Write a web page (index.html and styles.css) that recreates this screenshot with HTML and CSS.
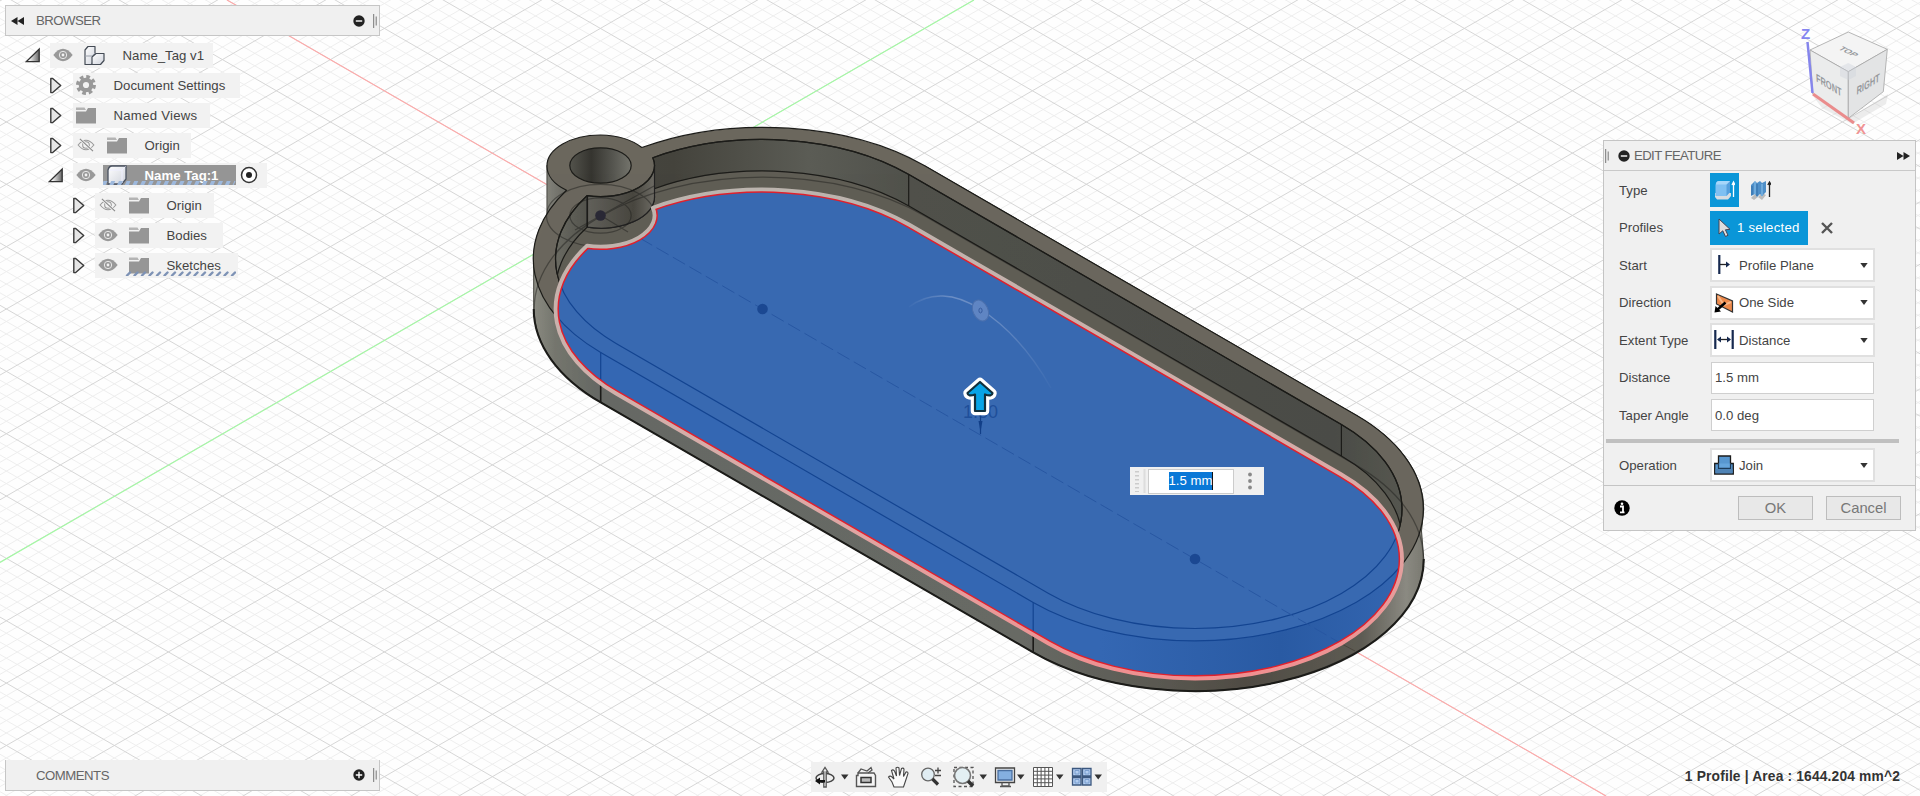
FILE: index.html
```html
<!DOCTYPE html>
<html lang="en">
<head>
<meta charset="utf-8">
<title>Name_Tag v1</title>
<link rel="stylesheet" href="styles.css">
</head>
<body>
<svg class="defs" width="0" height="0">
  <defs>
    <linearGradient id="triFill" x1="0" x2="1"><stop offset="0.2" stop-color="#fff"/><stop offset="1" stop-color="#666"/></linearGradient>
    <linearGradient id="boxFill" x1="0" x2="1" y2="1"><stop offset="0" stop-color="#fff"/><stop offset="1" stop-color="#cfd3dc"/></linearGradient>
    <symbol id="open" viewBox="0 0 16 16"><path d="M14.2 1.5V14.2H1.2Z" fill="url(#triFill)" stroke="#333" stroke-width="1.3"/></symbol>
    <symbol id="closed" viewBox="0 0 16 18"><path d="M2.500 1.500H4.500L13 9L4.500 16.500H2.500Z" fill="#e6e6e6" stroke="#3a3a3a" stroke-width="1.5" stroke-linejoin="round"/></symbol>
    <symbol id="eye" viewBox="0 0 20 14"><path d="M0.300 7Q10 -5.500 19.700 7Q10 19.500 0.300 7Z" fill="#999"/><circle cx="10" cy="7" r="3.700" fill="#999" stroke="#e8e8e8" stroke-width="1"/><circle cx="10" cy="7" r="1.400" fill="#f2f2f2"/></symbol>
    <symbol id="eyeoff" viewBox="0 0 20 16"><path d="M1 8Q10 -3 19 8Q10 19 1 8Z" fill="none" stroke="#999" stroke-width="1.200"/><circle cx="10" cy="8" r="3.800" fill="none" stroke="#999" stroke-width="1.200"/><path d="M3 1L18 15" stroke="#f2f2f2" stroke-width="3"/><path d="M3 1L18 15" stroke="#888" stroke-width="1.300"/></symbol>
    <symbol id="folder" viewBox="0 0 20 17"><path d="M0 5H10L12 1.500H20V17H0Z" fill="#969696"/><path d="M0 1H8.500L10 3.500H0Z" fill="#b4b4b4"/></symbol>
    <symbol id="gear" viewBox="0 0 20 20"><circle cx="10" cy="10" r="8.200" fill="none" stroke="#999" stroke-width="3.500" stroke-dasharray="3.600 2.840"/><circle cx="10" cy="10" r="5.200" fill="none" stroke="#999" stroke-width="4.200"/></symbol>
    <symbol id="asm" viewBox="0 0 21 21"><g fill="url(#boxFill)" stroke="#444b55" stroke-width="1.200" stroke-linejoin="round"><path d="M1 5L4 1.500H11V8L8 19.500H1Z"/><path d="M8 12L12 8.500H20V15.500L16.500 19.500H8Z"/></g><path d="M1 11H8L11 8" fill="none" stroke="#9aa0aa"/></symbol>
    <symbol id="cube" viewBox="0 0 20 20"><path d="M1 5Q2 1 5 1H19V14L15 19H1Z" fill="url(#boxFill)" stroke="#4a5260" stroke-width="1.300"/><path d="M2 5H15L18.500 1.500M15 5V18" fill="none" stroke="#eef" stroke-width="1"/></symbol>
    <symbol id="caret" viewBox="0 0 8 5"><path d="M0.300 0H7.700L4 5Z" fill="#333"/></symbol>
    <symbol id="minus" viewBox="0 0 12 12"><circle cx="6" cy="6" r="5.700" fill="#222"/><path d="M2.800 6H9.200" stroke="#fff" stroke-width="1.400"/></symbol>
    <symbol id="plus" viewBox="0 0 12 12"><circle cx="6" cy="6" r="5.700" fill="#222"/><path d="M2.800 6H9.200M6 2.800V9.200" stroke="#fff" stroke-width="1.400"/></symbol>
    <symbol id="ff" viewBox="0 0 13 8"><path d="M0 0L6.500 4L0 8ZM6.500 0L13 4L6.500 8Z" fill="#222"/></symbol>
    <symbol id="grip" viewBox="0 0 4 14"><path d="M0.700 0V14" stroke="#777" stroke-width="1"/><path d="M3.200 2.500V11.500" stroke="#777" stroke-width="1"/></symbol>
  </defs>
</svg>

<svg class="scene" viewBox="0 0 1920 796" width="1920" height="796">
  <defs>
    <linearGradient id="wall" gradientUnits="userSpaceOnUse" x1="533" y1="0" x2="1424" y2="0">
      <stop offset="0" stop-color="#8b8b82"/><stop offset="0.025" stop-color="#75766e"/><stop offset="0.070" stop-color="#666964"/>
      <stop offset="0.550" stop-color="#686a65"/><stop offset="0.680" stop-color="#5d5c55"/><stop offset="0.800" stop-color="#504c44"/>
      <stop offset="0.930" stop-color="#5e5c54"/><stop offset="0.980" stop-color="#8b8a82"/><stop offset="1" stop-color="#7a7971"/>
    </linearGradient>
    <linearGradient id="inner" gradientUnits="userSpaceOnUse" x1="555" y1="0" x2="1402" y2="0">
      <stop offset="0" stop-color="#6b6b63"/><stop offset="0.060" stop-color="#45453f"/><stop offset="0.140" stop-color="#44433c"/><stop offset="0.300" stop-color="#5b5c55"/>
      <stop offset="0.420" stop-color="#50514b"/><stop offset="0.920" stop-color="#4b4c47"/><stop offset="1" stop-color="#565750"/>
    </linearGradient>
    <linearGradient id="bossWall" gradientUnits="userSpaceOnUse" x1="546" y1="0" x2="655" y2="0">
      <stop offset="0" stop-color="#84847c"/><stop offset="0.250" stop-color="#605f59"/><stop offset="0.400" stop-color="#605f59"/><stop offset="0.800" stop-color="#48463f"/><stop offset="1" stop-color="#6e6c65"/>
    </linearGradient>
    <linearGradient id="hole" x1="0" x2="1"><stop offset="0" stop-color="#53534c"/><stop offset="0.350" stop-color="#35342f"/><stop offset="0.700" stop-color="#55554f"/><stop offset="1" stop-color="#74746c"/></linearGradient>
    <linearGradient id="halo" x1="0" x2="0" y1="0" y2="1"><stop offset="0" stop-color="#bcb4ae"/><stop offset="0.400" stop-color="#cfb0ab"/><stop offset="0.650" stop-color="#dda8a5"/><stop offset="1" stop-color="#f08f90"/></linearGradient>
    <linearGradient id="blueWall" gradientUnits="userSpaceOnUse" x1="1100" y1="0" x2="1400" y2="0"><stop offset="0" stop-color="#3467b3"/><stop offset="0.600" stop-color="#295aa3"/><stop offset="1" stop-color="#3365b0"/></linearGradient>
    <linearGradient id="arcFade" x1="0" x2="1"><stop offset="0" stop-color="#8ea7d2" stop-opacity="0.050"/><stop offset="0.300" stop-color="#8ea7d2" stop-opacity="0.600"/><stop offset="0.600" stop-color="#8ea7d2" stop-opacity="0.550"/><stop offset="1" stop-color="#8ea7d2" stop-opacity="0.050"/></linearGradient>
    <path id="profile" d="M587 245.700A54 31.200 0 0 0 652.800 207.700A207 119.500 0 0 1 908.900 224.500L1341.400 474.500A207 119.500 0 0 1 1048.600 643.500L616.100 393.500A207 119.500 0 0 1 587 245.700Z"/>
    <path id="rim" d="M924.300 165.600L1356.800 415.600A228.800 132.100 0 0 1 1033.200 602.400L600.700 352.400A228.800 132.100 0 0 1 924.300 165.600Z"/>
    <clipPath id="inProfile"><use href="#profile"/></clipPath>
    <clipPath id="inMouth"><use href="#profile" y="-50"/></clipPath>
    <clipPath id="inBody"><path d="M546.500 165.500A54 31.200 0 0 1 600.500 134.300L642.500 146.500A228.800 132.100 0 0 1 924.300 165.600L1356.800 415.600A228.800 132.100 0 0 1 1423.800 509V559A228.800 132.100 0 0 1 1033.200 652.400L600.700 402.400A228.800 132.100 0 0 1 533.700 309V259L546.500 214Z"/></clipPath>
  </defs>
  <g id="grid">
    <path id="minor" class="grid-minor"/>
    <path id="major" class="grid-major"/>
    <path class="axis-x" d="M227 0L1606 796"/>
    <path class="axis-y" d="M0 562.500L974 0"/>
  </g>

  <g class="edges">
    <path d="M547 165.500V215.500A54 31.200 0 0 0 654.500 215.500V165.500Z" fill="url(#bossWall)" stroke="#55544e"/>
    <path d="M924.300 165.600L1356.800 415.600A228.800 132.100 0 0 1 1423.800 509L1421.500 531L1423.800 559A228.800 132.100 0 0 1 1033.200 652.400L600.700 402.400A228.800 132.100 0 0 1 533.700 309V259A228.800 132.100 0 0 1 567.700 189.700L652 158Z" fill="url(#wall)" stroke="#44443e" stroke-width="1"/>
    <path d="M533.700 309A228.800 132.100 0 0 0 600.700 402.400L1033.200 652.400A228.800 132.100 0 0 0 1423.800 559" fill="none" stroke-width="2"/>
    <path d="M641.800 147.500A228.800 132.100 0 0 1 924.300 165.600L1356.800 415.600A228.800 132.100 0 0 1 1033.200 602.400L600.700 352.400A228.800 132.100 0 0 1 566.500 190.200A53.500 30.900 0 0 1 547 165.900A53.500 30.900 0 0 1 600.500 135A53.500 30.900 0 0 1 641.800 147.500Z" fill="#6b675d"/>
    <use href="#profile" y="-50" fill="url(#inner)"/>
    <g clip-path="url(#inMouth)">
      <use href="#profile" y="-18.500" fill="#605d55"/>
      <path d="M587 195.700A54 31.200 0 0 0 654.500 165.500V197A54 31.200 0 0 1 587 227.200Z" fill="url(#bossWall)" stroke="#222"/>
      <path d="M908.700 174.500V206M1341.400 424.500V456M587.500 195.700V227"/>
    </g>
    <use href="#profile" y="-50" fill="none"/>
    <ellipse cx="600.500" cy="165.500" rx="30.700" ry="17.700" fill="url(#hole)"/>
    <path d="M600.700 353V402M1033.200 603V652" stroke-width="1.600"/>
  </g>
  <g class="hidden-edges" clip-path="url(#inBody)">
    <use href="#rim" y="50"/>
    <ellipse cx="600.500" cy="215.500" rx="54" ry="31.200"/>
    <ellipse cx="600.500" cy="215.500" rx="30.700" ry="17.700"/>
    <path d="M575 230L654 186M600 215L628 232"/>
  </g>
  <circle cx="600.500" cy="215.500" r="5.300" fill="#292835"/>
  <path d="M1340 643L1355 651" stroke="#4a453d" fill="none"/>

  <use href="#profile" fill="#3869b1"/>
  <g clip-path="url(#inProfile)">
    <path d="M500 294L600.700 352.400L1033.200 602.400A228.800 132.100 0 0 0 1423.800 509V720H500Z" fill="url(#blueWall)"/>
    <g class="ghost-edges">
      <use href="#rim"/>
      <use href="#profile" y="-50"/>
      <path d="M600.700 352.400V402M1033.200 602.400V652"/>
    </g>
    <path class="centerline" d="M640 238.200L1340 642.900"/>
    <use href="#profile" class="selected-edge"/>
  </g>
  <use href="#profile" fill="none" stroke="url(#halo)" stroke-width="3.800" stroke-linejoin="round"/>
  <circle cx="762.500" cy="309" r="5.300" fill="#1b4892"/>
  <circle cx="1195" cy="559" r="5.300" fill="#1b4892"/>

  <path d="M909 307C930 291 955 293 980 309C1010 328 1033 356 1051 388" fill="none" stroke="url(#arcFade)" stroke-width="1.400"/>
  <ellipse cx="980.500" cy="310.500" rx="7.500" ry="11" transform="rotate(-24 980.500 310.500)" fill="#5f85c3" stroke="#4b70ad"/>
  <ellipse cx="980.500" cy="310.500" rx="1.600" ry="2.400" fill="none" stroke="#365b9e"/>
  <text class="dimension" x="963" y="418" textLength="35">1.50</text>
  <path d="M980.500 415V434" stroke="#123f88" stroke-width="1.200"/><path d="M978.500 421H982.500L980.500 432Z" fill="#123f88"/>
  <path d="M980 382L992.500 393Q992 397 985 394.500V411H975V394.500Q968 397 967.500 393Z" fill="none" stroke="#fff" stroke-width="8.500" stroke-linejoin="round"/>
  <path d="M980 382L992.500 393Q992 397 985 394.500V411H975V394.500Q968 397 967.500 393Z" fill="#08a4e6" stroke="#12303c" stroke-width="2.200" stroke-linejoin="round"/>

  <g class="viewcube">
    <path d="M1813 96L1848 119L1888 94L1886 104L1852 124L1822 108Z" fill="#999" opacity="0.180" stroke="none"/>
    <path d="M1848.300 32L1887.300 49.300L1848.300 71.700L1810 50Z" fill="#f4f4f4"/>
    <path d="M1810 50L1848.300 71.700V118.300L1812.700 94Z" fill="#ebecec"/>
    <path d="M1848.300 71.700L1887.300 49.300L1883.300 91.700L1848.300 118.300Z" fill="#e3e4e5"/>
    <path d="M1840 67L1848.300 63L1856 67V76L1848.300 80L1840 76Z" fill="#ccd3dc" opacity="0.400" stroke="none"/>
    <path d="M1807.500 42L1812.500 93" stroke="#8585ec" stroke-width="2.500"/>
    <path d="M1813 94L1854 123" stroke="#ea8c8c" stroke-width="3"/>
    <text class="axis-z" x="1801" y="38.500">Z</text>
    <text class="axis-label-x" x="1856" y="134">X</text>
    <g class="face">
      <text transform="matrix(.85 .42 -.8 .42 1846 53)" text-anchor="middle">TOP</text>
      <text transform="matrix(.78 .47 .06 1.200 1829 89)" text-anchor="middle">FRONT</text>
      <text transform="matrix(.78 -.47 -.04 1.200 1868 88)" text-anchor="middle">RIGHT</text>
    </g>
  </g>
</svg>

<header class="dock dock-browser">
  <svg class="ff flip"><use href="#ff"/></svg><span class="dock-title">BROWSER</span>
  <svg class="dot"><use href="#minus"/></svg><svg class="grip"><use href="#grip"/></svg>
</header>

<nav class="tree">
  <div class="row l0"><svg class="tw"><use href="#open"/></svg><div class="chip w163"><svg class="eye"><use href="#eye"/></svg><svg class="asm"><use href="#asm"/></svg><span class="name">Name_Tag v1</span></div></div>
  <div class="row l1"><svg class="tw"><use href="#closed"/></svg><div class="chip w167"><svg class="ico"><use href="#gear"/></svg><span class="name">Document Settings</span></div></div>
  <div class="row l1"><svg class="tw"><use href="#closed"/></svg><div class="chip w137"><svg class="ico"><use href="#folder"/></svg><span class="name wide">Named Views</span></div></div>
  <div class="row l1"><svg class="tw"><use href="#closed"/></svg><div class="chip w118"><svg class="eye"><use href="#eyeoff"/></svg><svg class="ico"><use href="#folder"/></svg><span class="name">Origin</span></div></div>
  <div class="row l1"><svg class="tw"><use href="#open"/></svg><div class="chip w194"><svg class="eye"><use href="#eye"/></svg><div class="active"><svg class="ico"><use href="#cube"/></svg><span class="name">Name Tag:1</span><svg class="hatch" viewBox="0 0 133 5"><path d="M1 3H133" stroke="#9db8dc" stroke-width="4" stroke-dasharray="4 3.700" transform="skewX(-25)"/></svg></div><svg class="radio" viewBox="0 0 18 18"><circle cx="9" cy="9" r="7.500" fill="#fff" stroke="#333" stroke-width="1.500"/><circle cx="9" cy="9" r="3" fill="#222"/></svg></div></div>
  <div class="row l2"><svg class="tw"><use href="#closed"/></svg><div class="chip w119"><svg class="eye"><use href="#eyeoff"/></svg><svg class="ico"><use href="#folder"/></svg><span class="name">Origin</span></div></div>
  <div class="row l2"><svg class="tw"><use href="#closed"/></svg><div class="chip w128"><svg class="eye"><use href="#eye"/></svg><svg class="ico"><use href="#folder"/></svg><span class="name">Bodies</span></div></div>
  <div class="row l2"><svg class="tw"><use href="#closed"/></svg><div class="chip w143"><svg class="eye"><use href="#eye"/></svg><svg class="ico"><use href="#folder"/></svg><span class="name">Sketches</span><svg class="hatch under" viewBox="0 0 112 5"><path d="M3 4.500L6 1.500M10.500 4.500L13.500 1.500M18 4.500L21 1.500M25.500 4.500L28.500 1.500M33 4.500L36 1.500M40.500 4.500L43.500 1.500M48 4.500L51 1.500M55.500 4.500L58.500 1.500M63 4.500L66 1.500M70.500 4.500L73.500 1.500M78 4.500L81 1.500M85.500 4.500L88.500 1.500M93 4.500L96 1.500M100.500 4.500L103.500 1.500M108 4.500L111 1.500" stroke="#7d92b5" stroke-width="2.400" stroke-linecap="round"/></svg></div></div>
</nav>

<section class="panel">
  <div class="panel-head"><svg class="grip"><use href="#grip"/></svg><svg class="dot"><use href="#minus"/></svg><span>EDIT FEATURE</span><svg class="ff"><use href="#ff"/></svg></div>
  <div class="form">
    <label>Type</label>
    <div class="types">
      <div class="type on"><svg viewBox="0 0 20 20"><path d="M0 17L2 19.500H13L16 16V13H0Z" fill="#d6dce2"/><path d="M0.500 5Q1 1 4 1H15V12L11.500 16H0.500Z" fill="#7fc0f2"/><path d="M11.500 4.500L15 1V12L11.500 16Z" fill="#559fdd"/><path d="M1 4.500H11.500L15 1H4Q1 1 1 4.500" fill="#a6d6fa"/><path d="M18.500 17V3M17 5L18.500 2L20 5" stroke="#fff" fill="none" stroke-width="1.300"/></svg></div>
      <div class="type"><svg viewBox="0 0 20 20"><path d="M0 18L4 14L7 17L11 13L15 15L11 20L7 17L3 20Z" fill="#bbb"/><path d="M0 5L4 1L6 3L9 1L11 3L15 1V12L11 16L9 14L6 17L4 14L0 16Z" fill="#4f8fc8"/><path d="M4 2V14M11 4V16" stroke="#6fabdc" stroke-width="2"/><path d="M6 4V16M1 6V15" stroke="#326fa8"/><path d="M18.500 17V3M16.800 5L18.500 2L20.200 5" stroke="#222" fill="none" stroke-width="1.300"/></svg></div>
    </div>
    <label>Profiles</label>
    <div class="types"><div class="pick"><svg class="cursor" viewBox="0 0 13 20"><path d="M1 1V16L4.800 12.800L7.500 18.500L10 17.300L7.400 11.800L12 11.300Z" fill="#ddd" stroke="#445" stroke-width="1"/></svg>1 selected</div><svg class="clear" viewBox="0 0 12 12"><path d="M1 1L11 11M11 1L1 11" stroke="#555" stroke-width="2.400"/></svg></div>
    <label>Start</label>
    <div class="select"><svg class="sico" viewBox="0 0 20 20"><path d="M5.300 0V19" stroke="#16294f" stroke-width="2.200"/><path d="M6 9.500H13" stroke="#222" stroke-width="1.300"/><path d="M12 6.500L16 9.500L12 12.500Z" fill="#16294f"/></svg>Profile Plane<svg class="caret"><use href="#caret"/></svg></div>
    <label>Direction</label>
    <div class="select"><svg class="sico" viewBox="0 0 20 20"><path d="M2.500 1L18.500 8V19L2.500 11Z" fill="#ee8a4b" stroke="#333" stroke-width="1.200"/><path d="M4 3L10 12L17 9" stroke="#f9b787" fill="none" stroke-width="2"/><path d="M11.500 9.500L3 17" stroke="#000" stroke-width="2.500"/><path d="M0.500 19.500L1.500 13L7 18.500Z"/></svg>One Side<svg class="caret"><use href="#caret"/></svg></div>
    <label>Extent Type</label>
    <div class="select"><svg class="sico" viewBox="0 0 20 20"><path d="M1.300 0V19M18.700 0V19" stroke="#16294f" stroke-width="2.200"/><path d="M4 9.500H16" stroke="#222" stroke-width="1.300"/><path d="M3 9.500L7 6.500V12.500ZM17 9.500L13 6.500V12.500Z" fill="#16294f"/></svg>Distance<svg class="caret"><use href="#caret"/></svg></div>
    <label>Distance</label><div class="field">1.5 mm</div>
    <label>Taper Angle</label><div class="field">0.0 deg</div>
  </div>
  <hr class="rule">
  <div class="form last">
    <label>Operation</label>
    <div class="select"><svg class="sico" viewBox="0 0 20 20"><path d="M0.700 8.500H4.500V1H16.500V8.500H19.300V19H0.700Z" fill="#5897d0" stroke="#1c1c1c" stroke-width="1.300"/><path d="M1.500 14H18.500V18.300H1.500Z" fill="#4f83b5"/><path d="M4.500 8.500V13.300H16.500V8.500" fill="#66a5dc" stroke="#1d3b58" stroke-width="1.200"/></svg>Join<svg class="caret"><use href="#caret"/></svg></div>
  </div>
  <div class="panel-foot"><svg class="info" viewBox="0 0 16 16"><circle cx="8" cy="8" r="7.700"/><path d="M6 6.500H9V12M6 12.300H10.500" stroke="#fff" stroke-width="1.800" fill="none"/><circle cx="8" cy="3.800" r="1.300" fill="#fff"/></svg><span class="btn">OK</span><span class="btn">Cancel</span></div>
</section>

<div class="mini"><svg class="mgrip" viewBox="0 0 12 24"><path d="M3 2V23" stroke="#ccc" stroke-width="4" stroke-dasharray="1.500 2.500"/><path d="M10.500 0V24" stroke="#ddd" stroke-width="2"/></svg><div class="mini-input"><span>1.5 mm</span></div><svg class="more" viewBox="0 0 4 18"><g fill="#888"><circle cx="2" cy="2.500" r="1.900"/><circle cx="2" cy="9" r="1.900"/><circle cx="2" cy="15.500" r="1.900"/></g></svg></div>

<header class="dock dock-comments">
  <span class="dock-title">COMMENTS</span>
  <svg class="dot"><use href="#plus"/></svg><svg class="grip"><use href="#grip"/></svg>
</header>

<div class="toolbar">
  <svg viewBox="0 0 296 30">
    <g fill="none" stroke="#333" stroke-width="1.300">
      <ellipse cx="14" cy="16" rx="9" ry="4.500" stroke="#444" stroke-width="1.500"/><path d="M12.800 25V10H11L14 5.500L17 10H15.200V25Z" fill="#eee" stroke="#555"/><path d="M4 19L9 15.500V18H14V20.500H9V22.500Z" fill="#111" stroke="none"/>
      <path d="M45.500 24.500V13.500H47V11H63L64.500 13.500V24.500Z" fill="#f4f4f4" stroke="#555" stroke-width="1.400"/><path d="M47 11L50 7L56 9L60 5.500L61 8L57 11" stroke="#555"/><path d="M50 15.500H60V20.500H50Z" fill="#bbb" stroke="#333" stroke-width="1.500"/>
      <path d="M83 25L81 20L77.500 15Q79 13 81.500 15.500L83 17L80.500 8.500Q82 7 83.500 9L85.500 14L85 6Q86.500 4.500 88 6L88.500 13.500L90.500 6.500Q92 5.500 93 7L92.500 14.500L95 10Q97 9.500 97 11.500L94.500 19L92.500 25Z" fill="#fafafa" stroke="#444" stroke-width="1.100"/>
      <circle cx="117" cy="12.500" r="6.300" fill="#e0edf3" stroke="#666"/><path d="M121.500 17L127 22.500" stroke="#333" stroke-width="3.200"/><path d="M124 8.500H130M127 5.500V11.500M124 13.500H130" stroke="#444"/>
      <path d="M143 5.500H162V24.500H143Z" stroke="#555" stroke-dasharray="3 2.500"/><circle cx="151.500" cy="13.500" r="8" fill="#e3eff3" stroke="#777" stroke-width="1.600"/><path d="M157 19L162 24" stroke="#333" stroke-width="3.500"/>
      <path d="M184.500 6H203.500V20.500H184.500Z" fill="#eee" stroke="#444"/><path d="M187 8.500H201V18H187Z" fill="#84afe0" stroke="#4a6fa0"/><path d="M191 20.500V24H198V20.500M189 24.500H200" stroke="#555"/>
      <path d="M222.500 5.500H241.500V24.500H222.500ZM226.300 5.500V24.500M230.100 5.500V24.500M233.900 5.500V24.500M237.700 5.500V24.500M222.500 9.300H241.500M222.500 13.100H241.500M222.500 16.900H241.500M222.500 20.700H241.500" fill="#fff" stroke="#555" stroke-width="1"/>
      <g fill="#b3cdf0" stroke="#3c587f"><path d="M261.500 6.500H270V14H261.500ZM271.500 6.500H280V14H271.500ZM261.500 15.500H270V23H261.500ZM271.500 15.500H280V23H271.500Z"/><path d="M264 8.500H268V12H264ZM274 8.500H278V12H274ZM264 17.500H268V21H264ZM274 17.500H278V21H274Z" stroke="#6d94c8" stroke-width="0.800"/></g>
    </g>
    <g fill="#333"><path d="M30 12.500H37.500L33.700 17.500ZM168.500 12.500H176L172.200 17.500ZM206 12.500H213.500L209.700 17.500ZM245 12.500H252.500L248.700 17.500ZM283.500 12.500H291L287.200 17.500Z"/></g>
  </svg>
</div>
<div class="status">1 Profile | Area : 1644.204 mm^2</div>
<script src="grid.js"></script>
</body>
</html>
```
FILE: styles.css
```css
body { margin: 0; width: 1920px; height: 796px; position: relative; overflow: hidden; background: #fefefe; font: 13.2px "Liberation Sans", Arial, sans-serif; color: #444; }
svg { display: block; flex: none; }
.defs { position: absolute; }
.scene { position: absolute; left: 0; top: 0; }
.grid-minor { stroke: #eeeeee; fill: none; stroke-width: 1; }
.grid-major { stroke: #d6d6d6; fill: none; stroke-width: 1; }
.axis-x { stroke: #ffa8a8; stroke-width: 1.1; }
.axis-y { stroke: #a2faa2; stroke-width: 1.1; }
.edges { stroke: #1c1c19; stroke-width: 1.2; stroke-linejoin: round; }
.hidden-edges { fill: none; stroke: #1c1c1a; stroke-width: 1.3; opacity: .45; }
.ghost-edges { fill: none; stroke: #134491; stroke-width: 1.2; }
.centerline { fill: none; stroke: #2857a2; stroke-width: 1; stroke-dasharray: 14 5; }
.selected-edge { fill: none; stroke: #e0202c; stroke-width: 6.8; }
.dimension { font-size: 18px; fill: #1f4f9a; }
.viewcube { stroke: #a4a4a4; stroke-width: .8; }
.viewcube text { stroke: none; font-family: "Liberation Sans", Arial, sans-serif; }
.axis-z { font-size: 15px; fill: #8585f0; font-weight: bold; }
.axis-label-x { font-size: 15px; fill: #f09494; font-weight: bold; }
.face text { font-size: 9.5px; fill: #96999d; font-weight: bold; }

.dock { position: absolute; left: 5px; width: 375px; box-sizing: border-box; display: flex; align-items: center; background: #f0f0f0; border: 1px solid #c6c6c6; color: #666; padding: 0 2px 0 5px; }
.dock-browser { top: 5px; height: 31px; }
.dock-comments { top: 760px; height: 31px; border-top: 0; padding-left: 30px; }
.dock-title { flex: 1; letter-spacing: -.5px; }
.dock-browser .dock-title { margin-left: 12px; }
.ff { width: 13px; height: 8px; }
.flip { transform: scaleX(-1); }
.dot { width: 12px; height: 12px; }
.grip { width: 4px; height: 14px; }
.dock .dot { margin-right: 8px; }

.tree { position: absolute; left: 0; top: 40px; display: flex; flex-direction: column; }
.row { height: 30px; display: flex; align-items: center; }
.tw { width: 16px; height: 17px; }
.l0 { padding-left: 25px; } .l0 .chip { margin-left: 9px; }
.l1 { padding-left: 48px; } .l1 .chip { margin-left: 9px; }
.l2 { padding-left: 71px; } .l2 .chip { margin-left: 8px; }
.chip { position: relative; height: 25px; background: #f2f2f2; display: flex; align-items: center; box-sizing: border-box; padding-left: 3px; white-space: nowrap; }
.eye { width: 20px; height: 14px; margin-right: 11px; }
.ico { width: 20px; height: 20px; }
.asm { width: 21px; height: 21px; }
.name { margin-left: 17.5px; letter-spacing: .02px; }
.wide { letter-spacing: .25px; }
.w163 { width: 163px; } .w167 { width: 167px; } .w137 { width: 137px; } .w118 { width: 118px; }
.w194 { width: 194px; } .w119 { width: 119px; } .w128 { width: 128px; } .w143 { width: 143px; }
.active { position: relative; width: 133px; height: 20px; margin-left: -4px; background: #959595; display: flex; align-items: center; color: #fff; font-weight: bold; }
.active .ico { margin-left: 4px; }
.hatch { position: absolute; left: 0; bottom: 0; width: 133px; height: 5px; }
.under { left: 29px; bottom: 2px; width: 112px; }
.radio { width: 18px; height: 18px; margin-left: 4px; }

.panel { position: absolute; left: 1603px; top: 140px; width: 313px; height: 391px; box-sizing: border-box; border: 1px solid #c4c4c4; background: #f0f0f0; display: flex; flex-direction: column; }
.panel-head { height: 30px; box-sizing: border-box; border-bottom: 1px solid #c9c9c9; display: flex; align-items: center; padding: 0 5px 0 1px; color: #666; }
.panel-head span { flex: 1; margin-left: 4px; letter-spacing: -.6px; }
.panel-head .dot { margin-left: 9px; }
.form { display: grid; grid-template-columns: 91px 165px; grid-auto-rows: 34px; row-gap: 3.5px; align-items: center; padding: 2px 0 0 15px; }
.types { display: flex; align-items: center; height: 34px; }
.type { width: 29px; height: 34px; display: flex; align-items: center; justify-content: center; margin-right: 7px; }
.type svg { width: 20px; height: 20px; }
.on { background: #0a96d8; }
.pick { width: 98px; height: 34px; background: #0a96d8; color: #fff; display: flex; align-items: center; letter-spacing: .25px; box-sizing: border-box; padding-left: 8px; }
.cursor { width: 13px; height: 20px; margin-right: 6px; }
.clear { width: 12px; height: 12px; margin-left: 13px; }
.select { height: 34px; box-sizing: border-box; border: 2px solid #e0e0e0; background: #fff; display: flex; align-items: center; padding: 0 5px 0 2px; }
.sico { width: 20px; height: 20px; margin-right: 5px; }
.caret { width: 8px; height: 5px; margin-left: auto; }
.field { height: 32px; margin: 0 1px; box-sizing: border-box; border: 1px solid #cfcfcf; background: #fff; display: flex; align-items: center; padding-left: 3px; }
.rule { margin: 7px 16px 0 2px; border: 0; height: 4px; background: #c0c0c0; }
.last { padding-top: 5px; }
.panel-foot { margin-top: 3px; flex: 1; border-top: 1px solid #c4c4c4; display: flex; align-items: center; padding: 0 14px 0 10px; gap: 13px; }
.info { width: 16px; height: 16px; margin-right: auto; }
.btn { width: 75px; height: 24px; box-sizing: border-box; border: 1px solid #bdbdbd; background: #e8e8e8; color: #777; font-size: 14.800px; display: flex; align-items: center; justify-content: center; }

.mini { position: absolute; left: 1130px; top: 467px; width: 134px; height: 28px; background: #f0f0f0; display: flex; align-items: center; }
.mgrip { width: 12px; height: 24px; margin: 0 2px 0 4px; }
.mini-input { width: 86px; height: 25px; box-sizing: border-box; border: 1px solid #ccc; background: #fff; display: flex; align-items: center; justify-content: center; }
.mini-input span { background: #0a78d7; color: #fff; line-height: 18px; border-right: 1px solid #111; }
.more { width: 4px; height: 18px; margin-left: 14px; }

.toolbar { position: absolute; left: 811px; top: 762px; width: 296px; height: 30px; background: #f0f0f0; }
.toolbar svg { width: 296px; height: 30px; }
.status { position: absolute; right: 20px; top: 769px; font-weight: bold; font-size: 13.800px; letter-spacing: .16px; color: #333; line-height: 16px; }
```
FILE: grid.js
```js
// Isometric ground grid: major cell every 54px horizontally, five minor cells per major.
(function () {
  var ox = 762.4, oy = 309, slope = 0.57735, cell = 62.354;
  function lines(step, skip) {
    var d = '';
    for (var k = -160; k < 160; k++) {
      if (skip && k % 5 === 0) continue;
      var o = k * step;
      var a = oy + o - ox * slope, b = oy + o + ox * slope, w = 1920 * slope;
      if (a < 796 && a + w > 0) d += 'M0 ' + a.toFixed(2) + 'L1920 ' + (a + w).toFixed(2);
      if (b > 0 && b - w < 796) d += 'M0 ' + b.toFixed(2) + 'L1920 ' + (b - w).toFixed(2);
    }
    return d;
  }
  document.getElementById('minor').setAttribute('d', lines(cell / 5, true));
  document.getElementById('major').setAttribute('d', lines(cell, false));
})();
```
